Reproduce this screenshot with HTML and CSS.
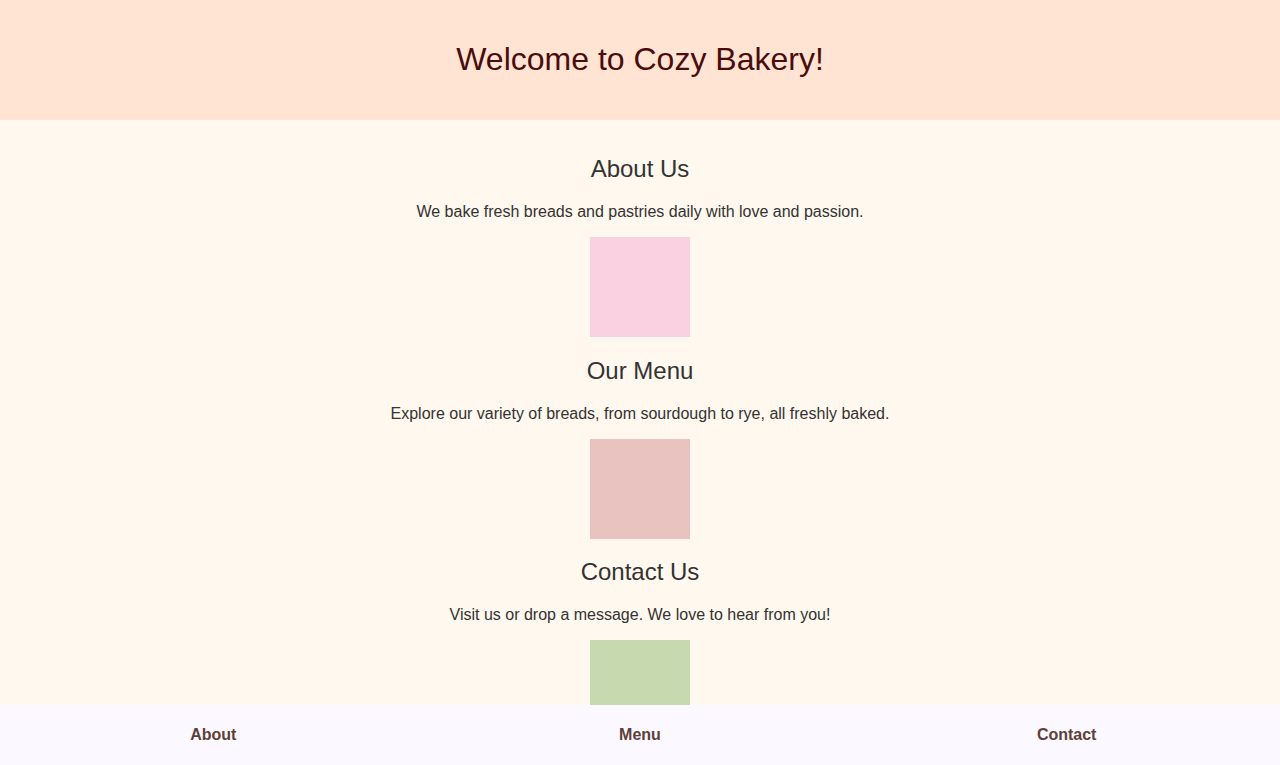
FILE: index.html
```html
<!DOCTYPE html>
<html lang="en">
<head>
  <meta charset="UTF-8">
  <title>Cozy Bakery</title>
  <link rel="stylesheet" href="styles.css">
</head>
<body>
  <header class="entete">
    <h1>Welcome to Cozy Bakery!</h1>
  </header>

  <main class="contenu">
    <section class="bloc" id="about">
      <h2>About Us</h2>
      <p>We bake fresh breads and pastries daily with love and passion.</p>
      <div class="photo rose"></div>
    </section>

    <section class="bloc" id="menu">
      <h2>Our Menu</h2>
      <p>Explore our variety of breads, from sourdough to rye, all freshly baked.</p>
      <div class="photo brun"></div>
    </section>

    <section class="bloc" id="contact">
      <h2>Contact Us</h2>
      <p>Visit us or drop a message. We love to hear from you!</p>
      <div class="photo vert"></div>
    </section>
  </main>

  <nav class="barre">
    <a href="#about">About</a>
    <a href="#menu">Menu</a>
    <a href="#contact">Contact</a>
  </nav>
</body>
</html>
```

FILE: styles.css
```css
body {
  margin: 0;
  font-family: "Liberation Sans", Arial, sans-serif;
  background-color: #fff8ee;
  color: #333;
}
.entete {
  background-color: #ffe4d4;
  padding: 20px;
  text-align: center;
}
.entete h1 {
  margin: 0.67em 0;
  font-size: 32px;
  font-weight: normal;
  color: #4a0c0c;
}
.contenu {
  padding: 15px 0 80px;
  text-align: center;
}
.bloc h2 {
  font-size: 24px;
  font-weight: normal;
  margin: 0.83em 0;
}
.bloc p {
  font-size: 16px;
  margin: 16px 0;
}
.photo {
  width: 100px;
  height: 100px;
  margin: 0 auto;
}
.rose {
  background-color: #fad1e0;
}
.brun {
  background-color: #e8c3bf;
}
.vert {
  background-color: #c7d9af;
}
.barre {
  position: fixed;
  left: 0;
  right: 0;
  bottom: 0;
  height: 60px;
  display: flex;
  align-items: center;
  background-color: #fbf9ff;
}
.barre a {
  flex: 1;
  text-align: center;
  font-weight: bold;
  font-size: 16px;
  color: #5d4037;
  text-decoration: none;
}
```
